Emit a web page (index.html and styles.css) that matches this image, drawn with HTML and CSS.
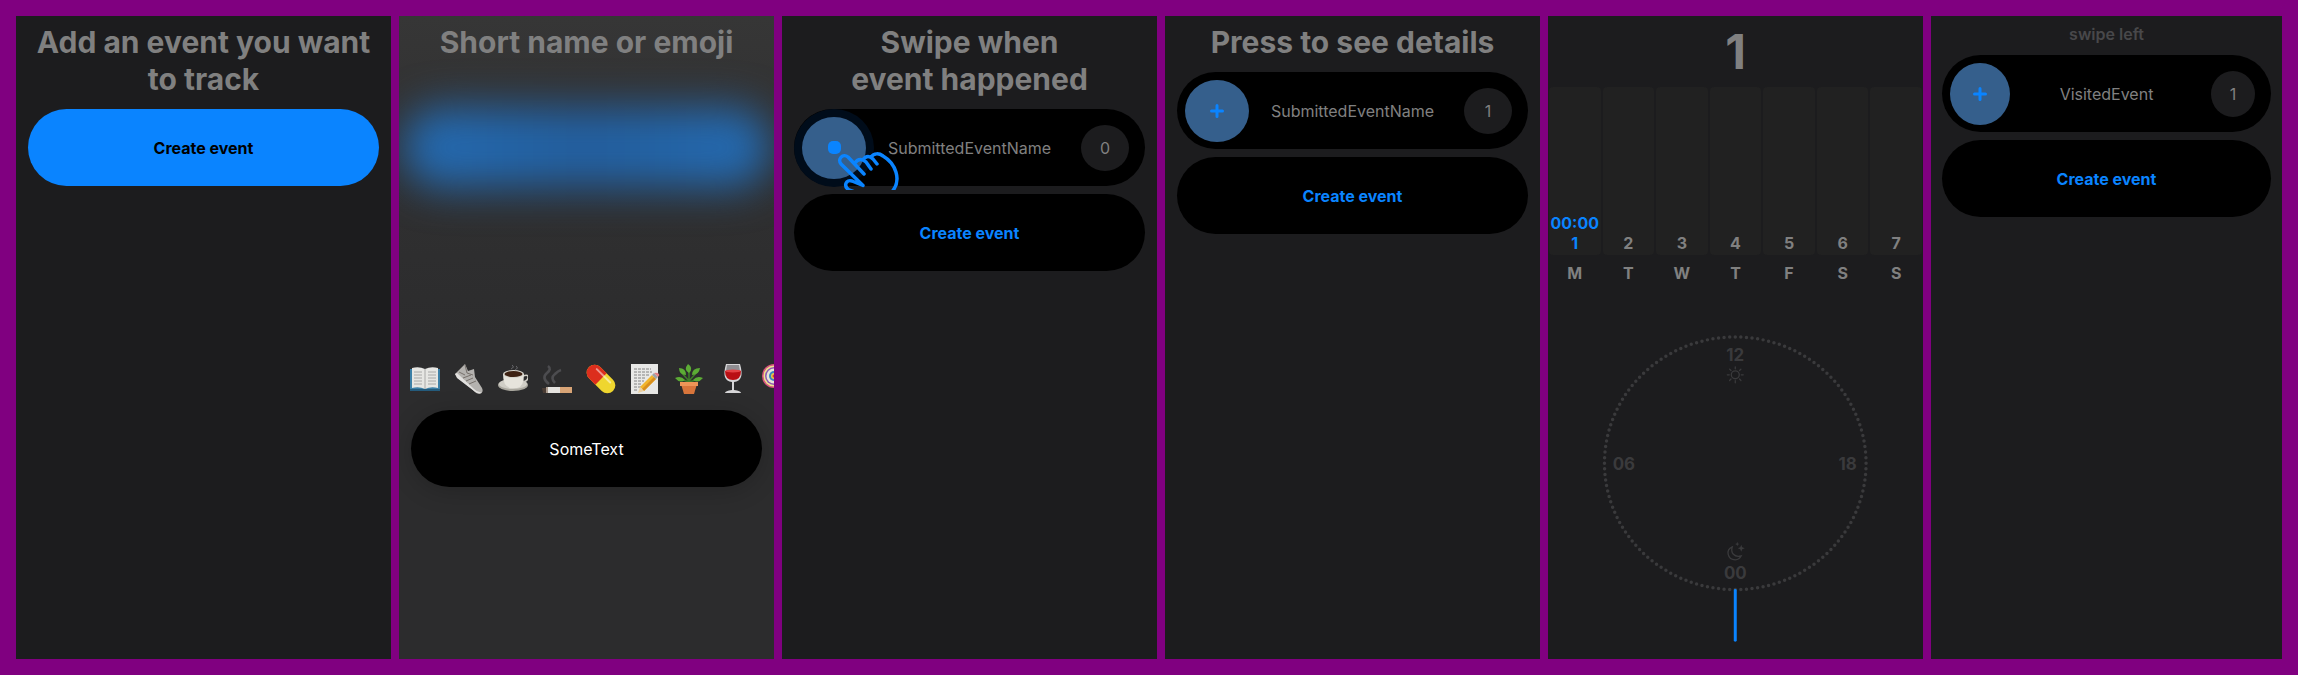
FILE: index.html
```
<!DOCTYPE html>
<html lang="en">
<head>
<meta charset="utf-8">
<title>Event tracker</title>
<link rel="stylesheet" href="styles.css">
</head>
<body>
<main class="board">
  <section class="screen">
    <h2 class="title">Add an event you want to track</h2>
    <button class="pill primary">Create event</button>
  </section>

  <section class="screen naming">
    <div class="glow"></div>
    <h2 class="title">Short name or emoji</h2>
    <div class="entry">
      <div class="emojis">
        <svg class="emoji" viewBox="0 0 30 30" role="img" aria-label="book"><path fill="#3c7fa6" d="M0 5h30v22H0z"/><path fill="#245b7c" d="M0 25h30v2H0z"/><path fill="#e6e6e3" d="M2 4q7-2 13 1v20q-6-3-13-1zM28 4q-7-2-13 1v20q6-3 13-1z"/><path stroke="#999" stroke-width=".8" fill="none" d="M15 5v20M4 8h8M4 11h8M4 14h8M4 17h8M4 20h8M18 8h8M18 11h8M18 14h8M18 17h8M18 20h8"/></svg>
        <svg class="emoji" viewBox="0 0 30 30" role="img" aria-label="shoe"><path fill="#b4b2af" d="M1 10 11 0l3 7 6-2 1 8 7 11q2 4-2 6-4 0-7-4L4 14z"/><path fill="#e2e1df" d="M1 10 3 9l17 16q4 4 8 3-3 3-8-1L3 14z"/><path stroke="#77716c" stroke-width="1" fill="none" d="m11 1 2 8 6 2M5 8l6 3M9 14l8-3M12 17l7-3M15 20l7-3"/></svg>
        <svg class="emoji" viewBox="0 0 30 30" role="img" aria-label="coffee"><ellipse cx="15" cy="21" rx="15" ry="6" fill="#a9a79e"/><ellipse cx="15" cy="20" rx="14" ry="5" fill="#d0cec6"/><path d="M25 12q6-2 5 2-1 4-7 4" stroke="#cfcdc5" stroke-width="1.6" fill="none"/><path fill="#e6e4dc" d="M5 10h21q0 13-7 14h-7Q5 22 5 10z"/><ellipse cx="15.500" cy="10" rx="10.500" ry="4" fill="#d6d4cc"/><ellipse cx="15.500" cy="10" rx="9" ry="3" fill="#3e2212"/><path d="M13 5q4-2 1-4M17 6q4-2 1-4" stroke="#66666a" fill="none"/></svg>
        <svg class="emoji" viewBox="0 0 30 30" role="img" aria-label="cigarette"><path d="M7 20Q-1 14 5 9q5-4 1-7M13 19q-5-5 0-9 3-3 6-4" stroke="#4c4c4f" stroke-width="2.6" fill="none"/><path fill="#e6e4e0" d="M4 23h14v6H4z"/><path fill="#d9a577" d="M18 23h12v6H18z"/><path fill="#4b3d35" d="M0 24h5v5H1z"/><path fill="#a99a8c" d="M4 23h2v6H4z"/></svg>
        <svg class="emoji" viewBox="0 0 30 30" role="img" aria-label="pill"><g transform="rotate(45 15 15)"><rect x="-2" y="7" width="34" height="16" rx="8" fill="#efd62f"/><path fill="#dc2e1d" d="M15 7H6a8 8 0 0 0 0 16h9z"/><path stroke="#ffffff" stroke-opacity=".5" stroke-width="2" stroke-linecap="round" d="M5 11h19"/></g></svg>
        <svg class="emoji" viewBox="0 0 30 30" role="img" aria-label="memo"><path fill="#e8e8e6" d="M1 0h27v30H1z"/><path stroke="#6b6b6b" stroke-width=".8" fill="none" stroke-dasharray="3 1" d="M4 5h17M4 8h18M4 11h16M4 14h12M4 17h10M4 20h8M4 23h7M4 26h4"/><path fill="#f1b52c" d="m10 23 12-12 4 4-12 12z"/><path fill="#d98f1d" d="m12 25 12-12 2 2-12 12z"/><path fill="#ecd1a2" d="m10 23 4 4-6 2z"/><path fill="#9fa4a8" d="m22 11 2-2 4 4-2 2z"/><path fill="#e58484" d="M24 9q3-1 5 1 1 1-1 3z"/></svg>
        <svg class="emoji" viewBox="0 0 30 30" role="img" aria-label="plant"><path stroke="#3e7d28" stroke-width="1.500" fill="none" d="M15 19V5M15 17 7 8M15 17l8-9M15 18l-9-3M15 18l10-3"/><path fill="#5cab35" d="M15 9q-6-3-1-9 6 4 1 9zM12 11Q5 11 5 4q7 0 7 7zM18 11q0-7 8-7-1 7-8 7zM11 16q-5 4-10-2 6-3 10 2zM19 16q5 4 10-2-6-3-10 2z"/><path fill="#d9763c" d="M7 20h16l-3 10H10z"/><path fill="#ee9557" d="M6 18h18v4H6z"/></svg>
        <svg class="emoji" viewBox="0 0 30 30" role="img" aria-label="wine"><path fill="#d7d6d8" d="M8 0h14q5 17-6 18v8q7 1 7 3H7q0-2 7-3v-8Q3 17 8 0z"/><path fill="#8f8d91" d="M9 1h12l1 6H8z"/><path fill="#b90f14" d="M7 7h16q0 9-8 9T7 7z"/><ellipse cx="15" cy="7" rx="8" ry="1.500" fill="#e34144"/></svg>
        <svg class="emoji" viewBox="0 0 30 30" role="img" aria-label="lollipop"><path stroke="#ddd" stroke-width="2" d="m20 20 9 9"/><circle cx="12" cy="12" r="12" fill="#d7557e"/><circle cx="12" cy="12" r="10.500" fill="#efe28d"/><circle cx="12" cy="12" r="9" fill="#8c5bb4"/><circle cx="12" cy="12" r="7.500" fill="#e8e5d8"/><circle cx="12" cy="12" r="5" fill="#3a83c4"/><circle cx="12" cy="12" r="3" fill="#e8c846"/><circle cx="12" cy="12" r="1.500" fill="#d43b3b"/></svg>
      </div>
      <input class="pill field" type="text" value="SomeText" aria-label="Event name">
    </div>
  </section>

  <section class="screen">
    <h2 class="title">Swipe when<br>event happened</h2>
    <div class="pill event pressed">
      <button class="add" aria-label="Add"><span class="dot"></span></button>
      <span class="name">SubmittedEventName</span>
      <span class="count">0</span>
      <svg class="hand" viewBox="0 0 70 39" aria-hidden="true"><path d="M22 41l-6-2c-6-4-3-11 3-9l11 4.500L8 13C4 8 10 2 15 6l16 17M22 12c3-5 8-4 11-1l5 7M30 9c3-5 7-4 10-1l4 5M38 6c3-4 8-4 12-1 12 7 20 24 8 37"/></svg>
    </div>
    <button class="pill">Create event</button>
  </section>

  <section class="screen">
    <h2 class="title">Press to see details</h2>
    <div class="pill event">
      <button class="add" aria-label="Add"><svg class="plus" viewBox="0 0 14 14"><path d="M7 1.500v11M1.500 7h11"/></svg></button>
      <span class="name">SubmittedEventName</span>
      <span class="count">1</span>
    </div>
    <button class="pill">Create event</button>
  </section>

  <section class="screen details">
    <div class="total">1</div>
    <div class="week">
      <div class="day today"><span>00:00</span><span>1</span></div>
      <div class="day">2</div>
      <div class="day">3</div>
      <div class="day">4</div>
      <div class="day">5</div>
      <div class="day">6</div>
      <div class="day">7</div>
    </div>
    <div class="weekdays"><span>M</span><span>T</span><span>W</span><span>T</span><span>F</span><span>S</span><span>S</span></div>
    <svg class="dial" viewBox="0 0 270 310" role="img" aria-label="Event times by hour">
      <ellipse class="ticks" cx="135" cy="130" rx="131.500" ry="127" pathLength="144"/>
      <g class="hours">
        <text x="135" y="27">12</text>
        <text x="23" y="137">06</text>
        <text x="248" y="137">18</text>
        <text x="135" y="246">00</text>
      </g>
      <g class="glyph">
        <circle cx="135" cy="41" r="4"/>
        <path d="M135 33v2M135 47v2M127 41h2M141 41h2M129.300 35.300l1.400 1.400M139.300 45.300l1.400 1.400M140.700 35.300l-1.400 1.400M130.700 45.300l-1.400 1.400"/>
        <path d="M132 214c-7 3-5 13 3 13 3 0 5-2 6-4-7 2-11-3-9-9z"/>
        <path class="star" d="M141 212l1 2.500 2.500 1-2.500 1-1 2.500-1-2.500-2.500-1 2.500-1zM137 209l.6 1.600 1.600.6-1.600.6-.6 1.600-.6-1.600-1.600-.6 1.600-.6z"/>
      </g>
      <path class="needle" d="M135 258v50"/>
    </svg>
  </section>

  <section class="screen hinted">
    <p class="hint">swipe left</p>
    <div class="pill event">
      <button class="add" aria-label="Add"><svg class="plus" viewBox="0 0 14 14"><path d="M7 1.500v11M1.500 7h11"/></svg></button>
      <span class="name">VisitedEvent</span>
      <span class="count">1</span>
    </div>
    <button class="pill">Create event</button>
  </section>
</main>
</body>
</html>
```
FILE: styles.css
```
* { box-sizing: border-box; }

body {
  margin: 0;
  background: #800080;
  color: #808080;
  font: 16px/20px Inter, "Liberation Sans", sans-serif;
}

.board {
  display: grid;
  grid-template-columns: repeat(5, 375fr) 351fr;
  gap: 8px;
  min-height: 100vh;
  padding: 16px;
}

.screen {
  position: relative;
  display: flex;
  flex-direction: column;
  gap: 8px;
  min-width: 0;
  padding: 8px 12px;
  overflow: hidden;
  background: #1c1c1e;
}

.title {
  margin: 0 0 3px;
  font-size: 30px;
  font-weight: 700;
  line-height: 37px;
  text-align: center;
}

.pill {
  flex: none;
  width: 100%;
  height: 77px;
  border: 0;
  border-radius: 39px;
  background: #000;
  color: #0a84ff;
  font: inherit;
  font-weight: 700;
  text-align: center;
}

.primary { background: #0a84ff; color: #000; }

.event {
  position: relative;
  display: grid;
  grid-template-columns: 64px 1fr 64px;
  align-items: center;
  padding: 0 8px;
  color: #808080;
  font-weight: 400;
}

.add {
  display: grid;
  place-items: center;
  height: 62px;
  padding: 0;
  border: 0;
  border-radius: 50%;
  background: #355f8c;
}

.pressed .add { box-shadow: 0 0 0 8px #000c1a; }
.dot { width: 13px; height: 13px; border-radius: 5px; background: #0a84ff; }
.plus { width: 14px; height: 14px; }
.plus path { stroke: #0a84ff; stroke-width: 3; stroke-linecap: round; }

.count {
  display: grid;
  place-items: center;
  height: 46px;
  margin: 0 8px;
  border-radius: 50%;
  background: #1c1c1e;
}

.hand {
  position: absolute;
  left: 39px;
  top: 42px;
  width: 70px;
  height: 39px;
}

.hand path {
  fill: none;
  stroke: #0a84ff;
  stroke-width: 3.5;
  stroke-linejoin: round;
  stroke-linecap: round;
}

.naming { background: linear-gradient(#363636, #303031 25%, #2c2c2d 50%, #2c2c2d); }

.naming > .title { position: relative; }

.glow {
  position: absolute;
  top: 91px;
  left: 4px;
  right: 4px;
  height: 81px;
  border-radius: 39px;
  background: linear-gradient(90deg, #246bb2, #235f9f 50%, #246bb2);
  filter: blur(20px);
}

.entry {
  display: flex;
  flex-direction: column;
  gap: 16px;
  margin-top: 292px;
}

.emojis { display: flex; gap: 14px; margin-left: -1px; }
.emoji { flex: none; width: 30px; height: 30px; }

.field {
  color: #fff;
  font-weight: 400;
  box-shadow: 0 4px 24px rgba(0, 0, 0, 0.2);
}

.details { gap: 0; padding: 0 1px; }

.total {
  padding: 12px 0 11px;
  font-size: 48px;
  font-weight: 700;
  line-height: 48px;
  text-align: center;
}

.week, .weekdays {
  display: grid;
  grid-template-columns: repeat(7, 1fr);
  gap: 2px;
  font-weight: 700;
  text-align: center;
}

.day {
  display: flex;
  flex-direction: column;
  justify-content: flex-end;
  height: 168px;
  padding-bottom: 2px;
  border-radius: 4px;
  background: #212121;
}

.today { color: #0a84ff; }
.weekdays { padding-top: 8px; }

.dial {
  align-self: center;
  width: 72%;
  margin-top: 51px;
}

.ticks {
  fill: none;
  stroke: #3a3a3c;
  stroke-width: 3.5;
  stroke-linecap: round;
  stroke-dasharray: 0 1;
}

.hours { fill: #3a3a3c; font-size: 17px; font-weight: 700; text-anchor: middle; }
.glyph { fill: none; stroke: #3a3a3c; stroke-width: 1.3; stroke-linecap: round; }
.star { fill: #3a3a3c; stroke: none; }
.needle { stroke: #0a84ff; stroke-width: 3; stroke-linecap: round; }

.hint {
  margin: 0 0 3px;
  color: #48484a;
  font-weight: 600;
  text-align: center;
}

.name { text-align: center; }
.hinted { padding: 8px 11px; }
.hinted .event { grid-template-columns: 60px 1fr 60px; }
```
